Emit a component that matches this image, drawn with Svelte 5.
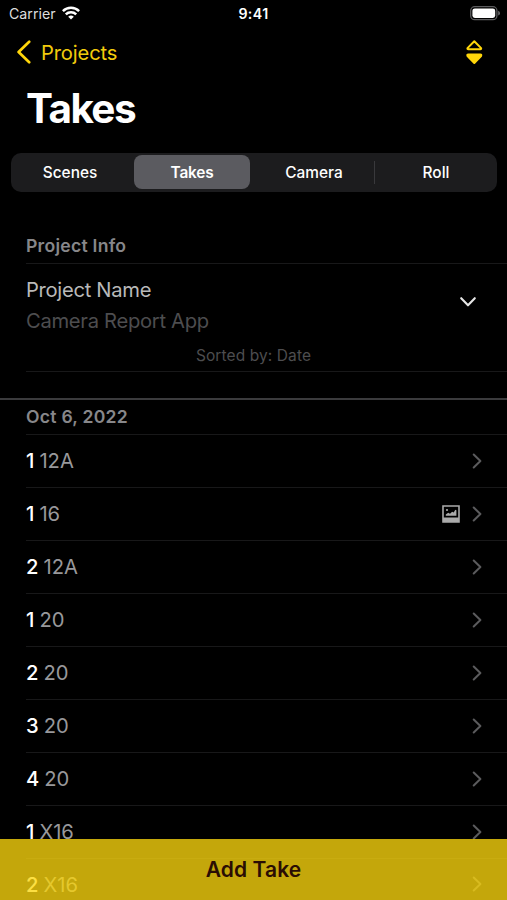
<script>
  const tabs = ['Scenes', 'Takes', 'Camera', 'Roll'];
  let selected = 'Takes';

  const takes = [
    { take: 1, scene: '12A' },
    { take: 1, scene: '16', photo: true },
    { take: 2, scene: '12A' },
    { take: 1, scene: '20' },
    { take: 2, scene: '20' },
    { take: 3, scene: '20' },
    { take: 4, scene: '20' },
    { take: 1, scene: 'X16' },
    { take: 2, scene: 'X16' }
  ];
</script>

<div class="screen">
  <header class="status">
    <div class="carrier">
      <span>Carrier</span>
      <svg width="18" height="14" viewBox="0 0 18 14" fill="none" stroke="#fff" stroke-width="2.5">
        <path d="M0.9 5.1a11.6 11.6 0 0 1 16.2 0" />
        <path d="M3.8 8.3a7.4 7.4 0 0 1 10.4 0" />
        <path d="M9 13.6L6.2 10.8a4 4 0 0 1 5.6 0z" fill="#fff" stroke="none" />
      </svg>
    </div>
    <span class="time">9:41</span>
    <svg class="battery" width="31" height="15" viewBox="0 0 31 15">
      <rect x="0.7" y="0.7" width="26.2" height="13" rx="4" fill="none" stroke="#5c5c5e" stroke-width="1.3" />
      <rect x="2.4" y="2.4" width="22.8" height="9.6" rx="2.4" fill="#fff" />
      <path d="M28.2 4.8q1.8 0.8 1.8 2.4t-1.8 2.4z" fill="#6b6b6d" />
    </svg>
  </header>

  <nav>
    <button class="back">
      <svg width="15" height="24" viewBox="0 0 15 24" fill="none" stroke="#ffd60a" stroke-width="2.7" stroke-linecap="round" stroke-linejoin="round">
        <path d="M13.2 1.8L2.6 12l10.6 10.2" />
      </svg>
      <span>Projects</span>
    </button>
    <button class="sort" aria-label="Sort">
      <svg width="18" height="26" viewBox="0 0 18 26" stroke="#ffd60a" stroke-width="2" stroke-linejoin="round">
        <path d="M9.3 2.2L16.1 9.1q0.3 1.2-0.8 1.2H3.3q-1.1 0-0.8-1.2z" fill="none" />
        <path d="M9.3 24L2.5 17q-0.6-1.6 0.8-1.6h12q1.4 0 0.8 1.6z" fill="#ffd60a" />
      </svg>
    </button>
  </nav>

  <h1>Takes</h1>

  <div class="tabs">
    {#each tabs as tab, i}
      <button class="tab" class:active={tab === selected} class:divided={i === 3} on:click={() => (selected = tab)}>
        {tab}
      </button>
    {/each}
  </div>

  <section class="info">
    <h2>Project Info</h2>
    <div class="project">
      <div class="name">
        <span>Project Name</span>
        <svg width="18" height="12" viewBox="0 0 18 12" fill="none" stroke="#e6e6e6" stroke-width="2.1" stroke-linecap="round" stroke-linejoin="round">
          <path d="M2.2 2.2L9 9.3l6.8-7.1" />
        </svg>
      </div>
      <div class="value">Camera Report App</div>
      <div class="sorted">Sorted by: Date</div>
    </div>
  </section>

  <section class="list">
    <h2 class="date">Oct 6, 2022</h2>
    <ul>
      {#each takes as item}
        <li>
          <span class="take">{item.take}</span>
          <span class="scene">{item.scene}</span>
          <span class="accessories">
            {#if item.photo}
              <svg width="18" height="18" viewBox="0 0 18 18">
                <path d="M1 1h16v16H1z" fill="none" stroke="#aaa" stroke-width="1.6" />
                <path d="M1 12.5h16V17H1z" fill="#aaa" />
                <path d="M3.8 10.8V9.4l2.4-1.7 1.8 1.1 2.1-2 1.6 0.6 1.6-2.6 1.1 0.5v5.5z" fill="#aaa" />
                <circle cx="5" cy="5" r="1.1" fill="#aaa" />
              </svg>
            {/if}
            <svg width="10" height="16" viewBox="0 0 10 16" fill="none" stroke="#5b5b5d" stroke-width="2" stroke-linecap="round" stroke-linejoin="round">
              <path d="M1.7 1.5L8.4 8l-6.7 6.5" />
            </svg>
          </span>
        </li>
      {/each}
    </ul>
  </section>

  <button class="add">Add Take</button>
</div>

<style>
  :global(body) {
    background: #000;
  }
  .screen {
    position: relative;
    width: 507px;
    height: 900px;
    overflow: hidden;
    background: #000;
    color: #fff;
    font-family: Inter, 'Liberation Sans', sans-serif;
  }
  button {
    margin: 0;
    padding: 0;
    border: 0;
    background: none;
    color: inherit;
    font: inherit;
  }
  svg {
    display: block;
    flex: none;
  }
  .status {
    display: grid;
    grid-template-columns: 1fr auto 1fr;
    align-items: center;
    height: 27px;
    padding: 0 6px 0 9px;
    font-size: 14.2px;
  }
  .carrier {
    display: flex;
    align-items: center;
    gap: 6px;
    color: #ddd;
  }
  .carrier svg {
    margin-top: -2px;
  }
  .time {
    padding-right: 3px;
    font-weight: 600;
    letter-spacing: 0.4px;
  }
  .battery {
    justify-self: end;
  }
  nav {
    display: flex;
    align-items: center;
    justify-content: space-between;
    height: 50px;
    padding: 0 24px 0 16px;
    color: #f2cb0c;
  }
  .back {
    display: flex;
    align-items: center;
    gap: 10px;
    font-size: 20.2px;
    letter-spacing: -0.15px;
  }
  h1 {
    margin: 7px 0 0 26px;
    font-size: 40.5px;
    font-weight: 700;
    line-height: 50px;
    letter-spacing: -1.6px;
  }
  .tabs {
    display: grid;
    grid-template-columns: 120px repeat(3, 122px);
    box-sizing: border-box;
    height: 39px;
    margin: 19px 10px 0 11px;
    padding: 2px 0 3px;
    border-radius: 10px;
    background: #1c1c1e;
  }
  .tab {
    position: relative;
    margin: 0 3px;
    border-radius: 8px;
    font-size: 15.4px;
    font-weight: 500;
  }
  .tab:first-child {
    margin-left: 1px;
  }
  .tab.active {
    background: #5b5b60;
    font-weight: 600;
    letter-spacing: -0.2px;
  }
  .divided::before {
    content: '';
    position: absolute;
    left: -4px;
    top: 6px;
    width: 1px;
    height: 23px;
    background: #39393c;
  }
  h2 {
    margin: 0 0 0 26px;
    font-size: 17.6px;
    font-weight: 600;
    letter-spacing: 0.25px;
    color: #87878a;
  }
  .info {
    padding-top: 35px;
  }
  .info h2 {
    height: 36px;
    line-height: 37px;
    border-bottom: 1px solid #181819;
  }
  .project {
    height: 107px;
    margin-left: 26px;
    border-bottom: 1px solid #181819;
    font-size: 20.2px;
    letter-spacing: -0.3px;
  }
  .name {
    display: flex;
    justify-content: space-between;
    height: 41px;
    padding: 10px 30px 0 0;
    box-sizing: border-box;
    line-height: 32px;
    color: #b9b9b9;
  }
  .name svg {
    margin-top: 22px;
  }
  .value {
    line-height: 32px;
    color: #4d4d4f;
  }
  .sorted {
    padding-right: 26px;
    font-size: 15.5px;
    line-height: 37px;
    letter-spacing: 0.1px;
    text-align: center;
    color: #4d4d4f;
  }
  .list {
    margin-top: 26px;
    border-top: 2px solid #3b3b3d;
  }
  .date {
    height: 34px;
    line-height: 34px;
    border-bottom: 1px solid #181819;
  }
  ul {
    margin: 0 0 0 26px;
    padding: 0;
    list-style: none;
  }
  li {
    display: flex;
    align-items: center;
    gap: 5px;
    box-sizing: border-box;
    height: 52.95px;
    padding-right: 25px;
    border-bottom: 1px solid #181819;
    font-size: 20.2px;
  }
  .take {
    font-weight: 500;
  }
  .scene {
    color: #98989b;
  }
  .accessories {
    display: flex;
    align-items: center;
    gap: 12px;
    margin-left: auto;
  }
  .add {
    position: absolute;
    left: 0;
    right: 0;
    bottom: 0;
    height: 61px;
    background: rgba(251, 214, 14, 0.78);
    color: #2a0d04;
    font-size: 21px;
    font-weight: 600;
    letter-spacing: 0.1px;
  }
</style>
